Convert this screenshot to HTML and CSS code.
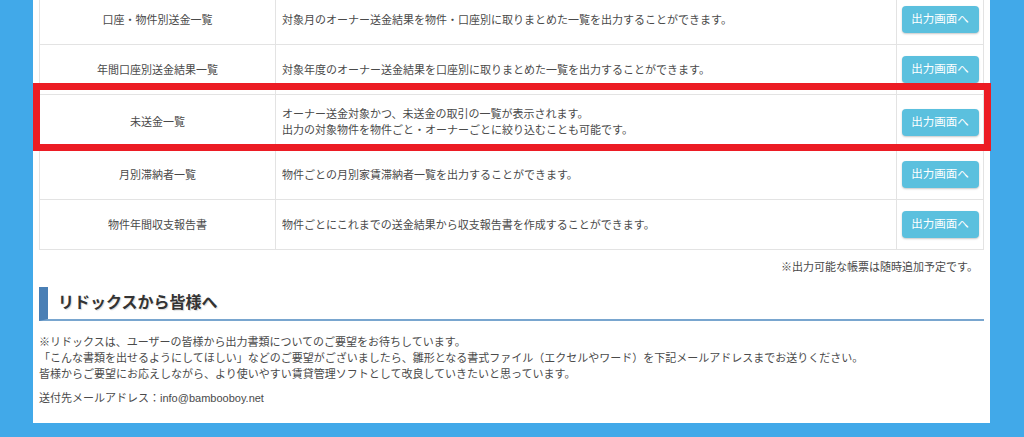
FILE: index.html
```html
<!DOCTYPE html>
<html lang="ja">
<head>
<meta charset="utf-8">
<title>帳票出力</title>
<link rel="stylesheet" href="styles.css">
</head>
<body>
<div class="panel">
  <table class="reports">
    <tr>
      <td class="name">口座・物件別送金一覧</td>
      <td class="desc">対象月のオーナー送金結果を物件・口座別に取りまとめた一覧を出力することができます。</td>
      <td class="act"><a class="btn">出力画面へ</a></td>
    </tr>
    <tr>
      <td class="name">年間口座別送金結果一覧</td>
      <td class="desc">対象年度のオーナー送金結果を口座別に取りまとめた一覧を出力することができます。</td>
      <td class="act"><a class="btn">出力画面へ</a></td>
    </tr>
    <tr>
      <td class="name">未送金一覧</td>
      <td class="desc">オーナー送金対象かつ、未送金の取引の一覧が表示されます。<br>出力の対象物件を物件ごと・オーナーごとに絞り込むことも可能です。</td>
      <td class="act"><a class="btn">出力画面へ</a></td>
    </tr>
    <tr>
      <td class="name">月別滞納者一覧</td>
      <td class="desc">物件ごとの月別家賃滞納者一覧を出力することができます。</td>
      <td class="act"><a class="btn">出力画面へ</a></td>
    </tr>
    <tr>
      <td class="name">物件年間収支報告書</td>
      <td class="desc">物件ごとにこれまでの送金結果から収支報告書を作成することができます。</td>
      <td class="act"><a class="btn">出力画面へ</a></td>
    </tr>
  </table>
  <p class="note">※出力可能な帳票は随時追加予定です。</p>
  <h2 class="section-title">リドックスから皆様へ</h2>
  <p class="message">※リドックスは、ユーザーの皆様から出力書類についてのご要望をお待ちしています。<br>「こんな書類を出せるようにしてほしい」などのご要望がございましたら、雛形となる書式ファイル（エクセルやワード）を下記メールアドレスまでお送りください。<br>皆様からご要望にお応えしながら、より使いやすい賃貸管理ソフトとして改良していきたいと思っています。</p>
  <p class="mail">送付先メールアドレス：info@bambooboy.net</p>
  <div class="highlight"></div>
</div>
</body>
</html>
```
FILE: styles.css
```css
html, body {
  margin: 0;
  padding: 0;
}
body {
  background: #41a9e9;
  font-family: "Liberation Sans", "Noto Sans CJK JP", sans-serif;
  color: #4a4a4a;
  font-size: 11px;
  height: 437px;
  overflow: hidden;
}
.panel {
  position: relative;
  background: #fff;
  margin: 0 34px 0 33px;
  padding: 0 6px 17px 6px;
}
.reports {
  width: 100%;
  border-collapse: collapse;
  margin-top: -6px;
  border: 1px solid #e3e3e3;
}
.reports td {
  border: 1px solid #e3e3e3;
  padding: 11px 6px;
  line-height: 16px;
  vertical-align: middle;
}
.reports .name {
  width: 223px;
  text-align: center;
}
.reports .desc {
  text-align: left;
}
.reports .act {
  width: 78px;
  text-align: center;
  padding: 11px 4px 11px 4px;
}
.btn {
  display: inline-block;
  width: 77px;
  height: 27px;
  line-height: 27px;
  background: #5bc0de;
  color: #fff;
  border-radius: 4px;
  box-shadow: 0 1px 2px rgba(0, 0, 0, 0.22);
  font-size: 11.5px;
  text-align: center;
}
.note {
  margin: 9px 6px 0 0;
  text-align: right;
  line-height: 16px;
}
.section-title {
  margin: 12px 0 0 0;
  height: 32px;
  line-height: 32px;
  padding-left: 10px;
  border-left: 9px solid #4a7fb5;
  border-bottom: 2px solid #79a6cf;
  font-size: 16px;
  font-weight: bold;
  color: #333;
  text-shadow: 1px 1px 1px rgba(0, 0, 0, 0.15);
}
.message {
  margin: 13px 0 0 0;
  line-height: 16px;
}
.mail {
  margin: 8px 0 0 0;
  line-height: 16px;
}
.highlight {
  position: absolute;
  left: 0;
  right: -1px;
  top: 89px;
  height: 54px;
  border: 7px solid #ec1c24;
}
```
